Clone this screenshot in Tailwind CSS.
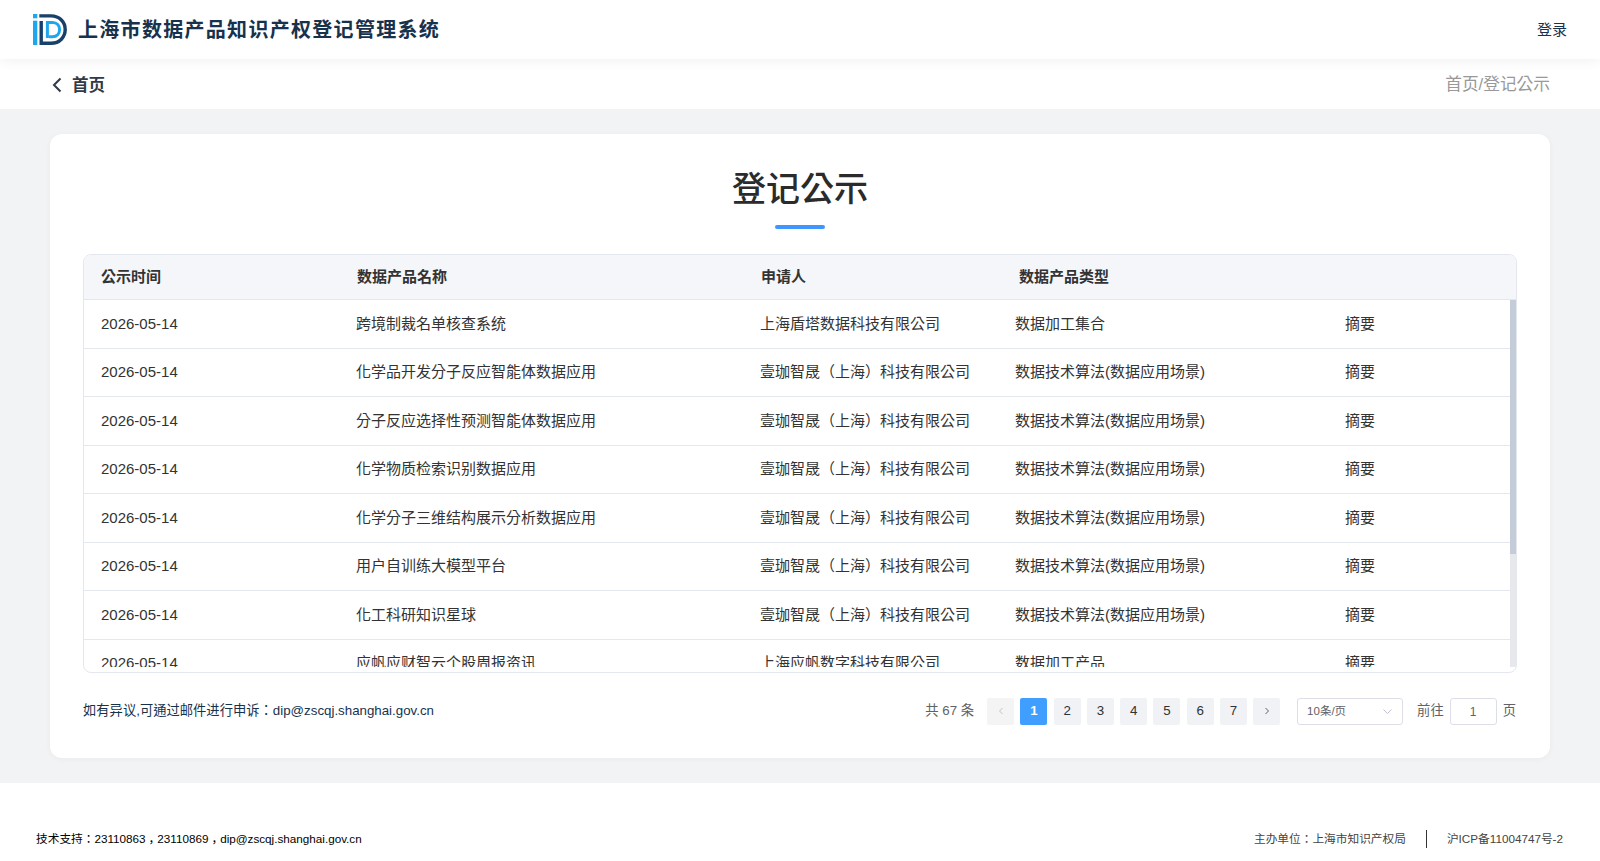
<!DOCTYPE html>
<html lang="zh-TW">

<head>
    <meta charset="UTF-8">
    <meta name="viewport" content="width=device-width, initial-scale=1.0">
    <title>登记公示</title>
    <script src="https://cdn.jsdelivr.net/npm/@tailwindcss/browser@4"></script>
</head>

<body class="bg-[#f2f3f5] h-[861px] overflow-hidden flex flex-col font-['Liberation_Sans','Noto_Sans_CJK_TC',sans-serif] text-[#333]">

    <!-- top bar -->
    <header class="h-[59px] shrink-0 bg-white flex items-center justify-between pl-[33px] pr-[33px] shadow-[0_2px_12px_rgba(0,0,0,0.06)] relative">
        <div class="flex items-center gap-[11px]">
            <svg class="w-[34px] h-[31px]" viewBox="0 0 34 31" fill="none">
                <rect x="0" y="0" width="4.3" height="4.3" fill="#1ea7ee" />
                <rect x="0" y="6.7" width="4.3" height="24.3" fill="#1ea7ee" />
                <path d="M6.3 1.9H18C26.8 1.9 32.2 8.3 32.2 15.6C32.2 23 26.8 29.3 18 29.3H8.2V7" stroke="#17406b" stroke-width="3.4" />
                <path d="M14.4 24V8.5H19.5C24 8.5 26.6 11.8 26.6 15.6C26.6 19.5 24 22.8 19.5 22.8H16" stroke="#1ea7ee" stroke-width="3" />
            </svg>
            <span class="text-[20px] font-bold tracking-[1.3px] text-[#17324d]">上海市数据产品知识产权登记管理系统</span>
        </div>
        <a class="text-[15px] text-[#17324d] pt-[1px]">登录</a>
    </header>

    <!-- breadcrumb -->
    <div class="h-[50px] shrink-0 bg-white flex items-center justify-between pl-[51px] pr-[50px] pt-[2px]">
        <div class="flex items-center gap-[9px] text-[16.5px] font-bold text-[#303a48]">
            <svg class="w-[12px] h-[18px]" viewBox="0 0 12 18" fill="none">
                <path d="M9.5 2.5L3 9L9.5 15.5" stroke="#303a48" stroke-width="2" />
            </svg>
            <span>首页</span>
        </div>
        <div class="text-[16.7px] text-[#999]">首页/登记公示</div>
    </div>

    <main class="flex-1 px-[50px] pt-[25px] pb-[25px]">
        <section class="h-[624px] bg-white rounded-[12px] px-[33px] shadow-[0_1px_6px_rgba(0,0,0,0.04)] flex flex-col">
            <h1 class="mt-[30px] text-center text-[34px] leading-[50px] font-medium text-[#2b2b2b]">登记公示</h1>
            <div class="w-[50px] h-[4px] rounded-full bg-[#4096ff] mx-auto mt-[11px]"></div>

            <!-- table -->
            <div class="mt-[25px] h-[419px] border border-[#e4e7ed] rounded-[8px] overflow-hidden flex flex-col">
                <div class="h-[45px] shrink-0 bg-[#f5f6fa] border-b border-[#e4e7ed] grid grid-cols-[256px_404px_258px_1fr] items-center pl-[17px] text-[15px] font-bold text-[#333]">
                    <div>公示时间</div>
                    <div>数据产品名称</div>
                    <div>申请人</div>
                    <div>数据产品类型</div>
                </div>
                <div class="flex-1 flex overflow-hidden mb-[5px]">
                    <div class="flex-1 overflow-hidden text-[15px]">
                        <div class="h-[48.5px] border-b border-[#e4e7ed] grid grid-cols-[255px_404px_255px_330px_1fr] items-center pl-[17px]">
                            <div>2026-05-14</div><div>跨境制裁名单核查系统</div><div>上海盾塔数据科技有限公司</div><div>数据加工集合</div><div>摘要</div>
                        </div>
                        <div class="h-[48.5px] border-b border-[#e4e7ed] grid grid-cols-[255px_404px_255px_330px_1fr] items-center pl-[17px]">
                            <div>2026-05-14</div><div>化学品开发分子反应智能体数据应用</div><div>壹珈智晟（上海）科技有限公司</div><div>数据技术算法(数据应用场景)</div><div>摘要</div>
                        </div>
                        <div class="h-[48.5px] border-b border-[#e4e7ed] grid grid-cols-[255px_404px_255px_330px_1fr] items-center pl-[17px]">
                            <div>2026-05-14</div><div>分子反应选择性预测智能体数据应用</div><div>壹珈智晟（上海）科技有限公司</div><div>数据技术算法(数据应用场景)</div><div>摘要</div>
                        </div>
                        <div class="h-[48.5px] border-b border-[#e4e7ed] grid grid-cols-[255px_404px_255px_330px_1fr] items-center pl-[17px]">
                            <div>2026-05-14</div><div>化学物质检索识别数据应用</div><div>壹珈智晟（上海）科技有限公司</div><div>数据技术算法(数据应用场景)</div><div>摘要</div>
                        </div>
                        <div class="h-[48.5px] border-b border-[#e4e7ed] grid grid-cols-[255px_404px_255px_330px_1fr] items-center pl-[17px]">
                            <div>2026-05-14</div><div>化学分子三维结构展示分析数据应用</div><div>壹珈智晟（上海）科技有限公司</div><div>数据技术算法(数据应用场景)</div><div>摘要</div>
                        </div>
                        <div class="h-[48.5px] border-b border-[#e4e7ed] grid grid-cols-[255px_404px_255px_330px_1fr] items-center pl-[17px]">
                            <div>2026-05-14</div><div>用户自训练大模型平台</div><div>壹珈智晟（上海）科技有限公司</div><div>数据技术算法(数据应用场景)</div><div>摘要</div>
                        </div>
                        <div class="h-[48.5px] border-b border-[#e4e7ed] grid grid-cols-[255px_404px_255px_330px_1fr] items-center pl-[17px]">
                            <div>2026-05-14</div><div>化工科研知识星球</div><div>壹珈智晟（上海）科技有限公司</div><div>数据技术算法(数据应用场景)</div><div>摘要</div>
                        </div>
                        <div class="h-[48.5px] border-b border-[#e4e7ed] grid grid-cols-[255px_404px_255px_330px_1fr] items-center pl-[17px]">
                            <div>2026-05-14</div><div>应帆应财智云个股周报资讯</div><div>上海应帆数字科技有限公司</div><div>数据加工产品</div><div>摘要</div>
                        </div>
                    </div>
                    <div class="w-[6px] shrink-0 bg-[#e6e8ec]">
                        <div class="h-[254px] bg-[#c3ccd8]"></div>
                    </div>
                </div>
            </div>

            <!-- notice and pagination -->
            <div class="mt-[11px] h-[54px] flex items-center justify-between">
                <div class="text-[13.3px] text-[#17324d]">如有异议,可通过邮件进行申诉：dip@zscqj.shanghai.gov.cn</div>
                <div class="flex items-center mr-[1px] text-[13.3px] text-[#606266]">
                    <span class="mr-[13px]">共 67 条</span>
                    <div class="flex items-center gap-[6.25px] text-[#303133]">
                        <div class="w-[27px] h-[27px] rounded-[2px] bg-[#f4f4f5] flex items-center justify-center">
                            <svg class="w-[10px] h-[10px]" viewBox="0 0 10 10" fill="none"><path d="M6.5 2L3.5 5L6.5 8" stroke="#c0c4cc" /></svg>
                        </div>
                        <div class="w-[27px] h-[27px] rounded-[2px] bg-[#409eff] text-white font-bold flex items-center justify-center">1</div>
                        <div class="w-[27px] h-[27px] rounded-[2px] bg-[#f0f2f5] flex items-center justify-center">2</div>
                        <div class="w-[27px] h-[27px] rounded-[2px] bg-[#f0f2f5] flex items-center justify-center">3</div>
                        <div class="w-[27px] h-[27px] rounded-[2px] bg-[#f0f2f5] flex items-center justify-center">4</div>
                        <div class="w-[27px] h-[27px] rounded-[2px] bg-[#f0f2f5] flex items-center justify-center">5</div>
                        <div class="w-[27px] h-[27px] rounded-[2px] bg-[#f0f2f5] flex items-center justify-center">6</div>
                        <div class="w-[27px] h-[27px] rounded-[2px] bg-[#f0f2f5] flex items-center justify-center">7</div>
                        <div class="w-[27px] h-[27px] rounded-[2px] bg-[#f0f2f5] flex items-center justify-center">
                            <svg class="w-[10px] h-[10px]" viewBox="0 0 10 10" fill="none"><path d="M3.5 2L6.5 5L3.5 8" stroke="#606266" /></svg>
                        </div>
                    </div>
                    <div class="ml-[17px] w-[106px] h-[27px] border border-[#dcdfe6] rounded-[3px] flex items-center justify-between pl-[9px] pr-[9px] pt-[1px] text-[11.5px] text-[#606266]">
                        <span>10条/页</span>
                        <svg class="w-[11px] h-[11px]" viewBox="0 0 11 11" fill="none"><path d="M1.5 3.5L5.5 7.5L9.5 3.5" stroke="#c0c4cc" /></svg>
                    </div>
                    <span class="ml-[14px]">前往</span>
                    <div class="ml-[6px] w-[47px] h-[27px] border border-[#dcdfe6] rounded-[3px] flex items-center justify-center pt-[2px] text-[12px]">1</div>
                    <span class="ml-[6px]">页</span>
                </div>
            </div>
        </section>
    </main>

    <footer class="h-[78px] shrink-0 bg-white flex items-center justify-between pl-[36px] pr-[37px] pt-[34px] text-[11.7px]">
        <div class="text-black">技术支持：23110863<span lang="zh-CN" class="ml-[3px] -mr-[3px]">，</span>23110869<span lang="zh-CN" class="ml-[3px] -mr-[3px]">，</span>dip@zscqj.shanghai.gov.cn</div>
        <div class="flex items-center text-[#444]">
            <span>主办单位：上海市知识产权局</span>
            <span class="w-[1px] h-[18px] bg-[#333] mx-[20px]"></span>
            <span>沪ICP备11004747号-2</span>
        </div>
    </footer>

</body>

</html>
